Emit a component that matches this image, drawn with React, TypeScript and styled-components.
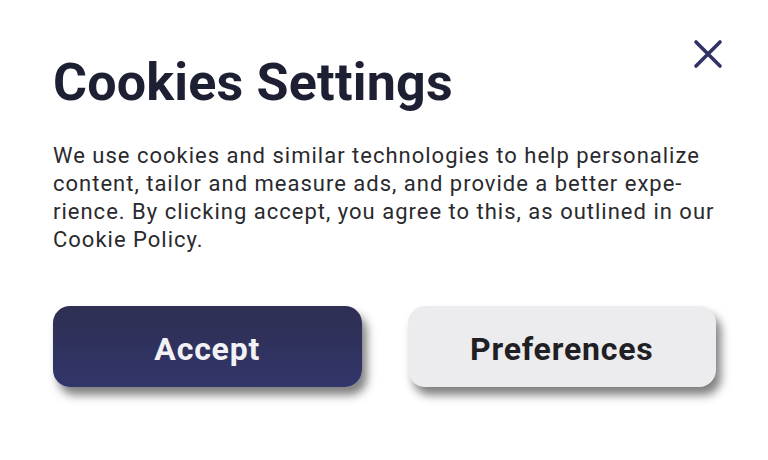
import React from 'react';
import styled, { createGlobalStyle } from 'styled-components';

const GlobalStyle = createGlobalStyle`
  html, body {
    margin: 0;
    padding: 0;
    background: #ffffff;
  }
`;

const Dialog = styled.div`
  position: relative;
  width: 768px;
  height: 460px;
  box-sizing: border-box;
  padding: 52px 52px 0 53px;
  background: #ffffff;
`;

const CloseButton = styled.button`
  position: absolute;
  top: 38px;
  right: 44px;
  width: 32px;
  height: 32px;
  padding: 0;
  border: none;
  background: none;
  cursor: pointer;
`;

const Title = styled.h1`
  margin: 0;
  font-family: 'Roboto', 'Liberation Sans', sans-serif;
  font-weight: 700;
  font-size: 52px;
  line-height: 62px;
  letter-spacing: 0.2px;
  color: #1d1f33;
`;

const Body = styled.p`
  margin: 28px 0 0;
  font-family: 'Roboto', 'Liberation Sans', sans-serif;
  font-weight: 400;
  font-size: 22px;
  line-height: 28px;
  letter-spacing: 1px;
  color: #2a2a2e;
`;

const Actions = styled.div`
  display: flex;
  gap: 46px;
  margin-top: 52px;
`;

const ActionButton = styled.button<{ $primary?: boolean }>`
  width: 309px;
  height: 81px;
  padding: 5px 0 0;
  border: none;
  border-radius: 17px;
  font-family: 'Roboto', 'Liberation Sans', sans-serif;
  font-weight: 700;
  font-size: 32px;
  letter-spacing: 0.8px;
  cursor: pointer;
  color: ${(p) => (p.$primary ? '#f2f2f6' : '#1f1f24')};
  background: ${(p) =>
    p.$primary ? 'linear-gradient(180deg, #2e2f52 0%, #32356a 100%)' : '#ececef'};
  box-shadow: 5px 8px 10px rgba(0, 0, 0, 0.5);
`;

const CloseIcon = () => (
  <svg width="32" height="32" viewBox="0 0 32 32">
    <path
      d="M4 4 L28 28 M28 4 L4 28"
      stroke="#2f3262"
      strokeWidth="3.6"
      strokeLinecap="round"
      fill="none"
    />
  </svg>
);

const App: React.FC = () => {
  return (
    <>
      <GlobalStyle />
      <Dialog>
        <CloseButton aria-label="Close">
          <CloseIcon />
        </CloseButton>
        <Title>Cookies Settings</Title>
        <Body>
          We use cookies and similar technologies to help personalize
          <br />
          content, tailor and measure ads, and provide a better expe-
          <br />
          rience. By clicking accept, you agree to this, as outlined in our
          <br />
          Cookie Policy.
        </Body>
        <Actions>
          <ActionButton $primary>Accept</ActionButton>
          <ActionButton>Preferences</ActionButton>
        </Actions>
      </Dialog>
    </>
  );
};

export default App;
